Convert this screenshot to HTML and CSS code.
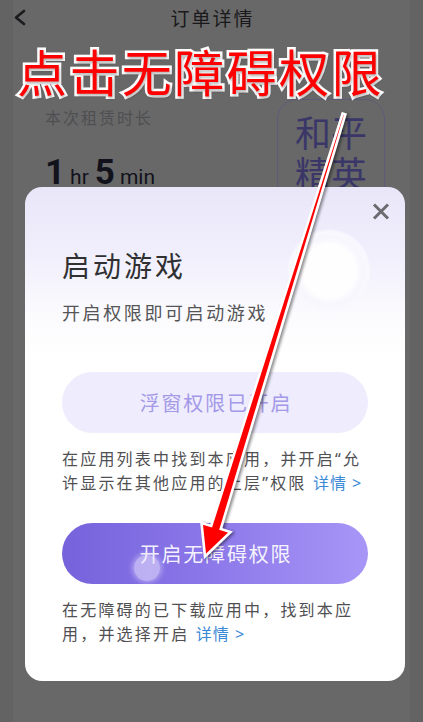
FILE: index.html
```html
<!DOCTYPE html>
<html lang="zh-CN">
<head>
<meta charset="utf-8">
<title>订单详情</title>
<link rel="stylesheet" href="styles.css">
</head>
<body>
<div class="page">
  <header class="topbar">
    <svg class="back" width="14" height="18" viewBox="0 0 14 18"><polyline points="11,2 3,8.5 11,15" fill="none" stroke="#1b1b1d" stroke-width="2.6" stroke-linecap="round" stroke-linejoin="round"/></svg>
    <h1 class="topbar-title">订单详情</h1>
  </header>

  <section class="summary">
    <div class="summary-info">
      <div class="summary-label">本次租赁时长</div>
      <div class="summary-amount"><span class="num">1</span><span class="unit">hr</span><span class="num">5</span><span class="unit">min</span></div>
    </div>
    <div class="game-tile">和平<br>精英</div>
  </section>

  <div class="annotation">点击无障碍权限</div>

  <div class="modal">
    <div class="modal-deco"></div>
    <svg class="modal-close" width="18" height="17" viewBox="0 0 18 17"><path d="M2 1.5 L16 15.5 M16 1.5 L2 15.5" stroke="#6c6b70" stroke-width="3" stroke-linecap="butt"/></svg>
    <h2 class="modal-title">启动游戏</h2>
    <p class="modal-sub">开启权限即可启动游戏</p>

    <div class="btn btn-done">浮窗权限已开启</div>
    <p class="desc">在应用列表中找到本应用，并开启“允许显示在其他应用的上层”权限 <span class="link">详情 &gt;</span></p>

    <div class="btn btn-primary">开启无障碍权限</div>
    <p class="desc">在无障碍的已下载应用中，找到本应用，并选择开启 <span class="link">详情 &gt;</span></p>

    <div class="touch"></div>
  </div>

  <svg class="arrow" width="423" height="722" viewBox="0 0 423 722">
    <polygon points="342.6,113.6 345.4,114.4 220.8,529 230.5,532 205,556.5 201.5,523 211.2,526" fill="#ff0000" stroke="#ffffff" stroke-width="2.6" stroke-linejoin="miter"/>
  </svg>
</div>
</body>
</html>
```

FILE: styles.css
```css
* { box-sizing: border-box; }
html, body { margin: 0; padding: 0; }
body {
  width: 423px;
  height: 722px;
  overflow: hidden;
  background: #606062;
  font-family: "Noto Sans CJK SC", "Noto Sans", sans-serif;
}
.page {
  position: relative;
  width: 423px;
  height: 722px;
  background: linear-gradient(90deg, #636364 0, #636364 13px, #686868 13px, #686868 410px, #636364 410px);
}
.topbar {
  height: 36px;
  display: flex;
  align-items: center;
  justify-content: center;
  position: relative;
}
.back {
  position: absolute;
  left: 13px;
  top: 9px;
}
.topbar-title {
  margin: 0;
  font-size: 19px;
  font-weight: 400;
  letter-spacing: 2px;
  color: #19191b;
  line-height: 34px;
  padding-left: 2px;
}
.summary {
  display: flex;
  justify-content: space-between;
  padding: 63px 38px 0 45px;
}
.summary-info {
  padding-top: 8px;
}
.summary-label {
  font-size: 16px;
  letter-spacing: 2px;
  line-height: 20px;
  color: #4f4f52;
}
.summary-amount {
  margin-top: 26px;
  display: flex;
  align-items: baseline;
  color: #12121c;
  font-family: "Roboto", "Liberation Sans", sans-serif;
  line-height: 40px;
}
.num {
  font-size: 35px;
  font-weight: 700;
}
.unit {
  font-size: 21px;
  margin: 0 6px 0 5px;
}
.game-tile {
  width: 108px;
  height: 130px;
  border: 1.5px solid #5d5c78;
  border-radius: 20px;
  text-align: center;
  font-size: 36px;
  line-height: 41px;
  padding-top: 11px;
  color: #3a3768;
  letter-spacing: 0;
}
.annotation {
  position: absolute;
  left: 17px;
  top: 38px;
  font-size: 50px;
  font-weight: 400;
  letter-spacing: 2.4px;
  line-height: 64px;
  color: #ff0000;
  -webkit-text-stroke: 5px #ffffff;
  paint-order: stroke fill;
  text-shadow: 1px 2px 3px rgba(0,0,0,0.3);
}
.modal {
  position: absolute;
  left: 25px;
  top: 187px;
  width: 380px;
  height: 494px;
  border-radius: 17px;
  background: linear-gradient(180deg, #e9e6f9 0%, #f1effc 14%, #fbfbfe 26%, #ffffff 34%);
  padding: 60px 37px 0 37px;
  overflow: hidden;
}
.modal-deco {
  position: absolute;
  left: 262px;
  top: 42px;
  width: 84px;
  height: 84px;
  border-radius: 50%;
  background: radial-gradient(circle, #fefeff 0 44%, #f7f6fd 56%, #f9f8fe 66%, rgba(255,255,255,0) 72%);
}
.modal-close {
  position: absolute;
  top: 16px;
  right: 15px;
}
.modal-title {
  position: relative;
  margin: 0;
  font-size: 28px;
  font-weight: 400;
  letter-spacing: 3px;
  line-height: 36px;
  color: #303033;
}
.modal-sub {
  position: relative;
  margin: 16px 0 0;
  font-size: 18px;
  letter-spacing: 2.6px;
  line-height: 26px;
  color: #555558;
}
.btn {
  height: 61px;
  border-radius: 31px;
  display: flex;
  align-items: center;
  justify-content: center;
  font-size: 20px;
  letter-spacing: 1.8px;
  padding-left: 2px;
}
.btn-done {
  margin-top: 47px;
  background: #efecfd;
  color: #a399e8;
}
.btn-primary {
  margin-top: 28px;
  background: linear-gradient(90deg, #7663dc 0%, #8a76e8 45%, #a896f7 100%);
  color: rgba(255,255,255,0.93);
}
.desc {
  margin: 14px 0 0;
  font-family: "Noto Sans", "Noto Sans CJK SC", sans-serif;
  font-size: 16px;
  letter-spacing: 2.2px;
  line-height: 24px;
  color: #505053;
}
.link {
  color: #3a8ad8;
  letter-spacing: 1px;
}
.touch {
  position: absolute;
  left: 109px;
  top: 368px;
  width: 26px;
  height: 26px;
  border-radius: 50%;
  background: rgba(236,232,255,0.55);
  box-shadow: 0 0 5px 2px rgba(230,225,255,0.45);
}
.arrow {
  position: absolute;
  left: 0;
  top: 0;
  pointer-events: none;
  filter: drop-shadow(2px 1px 1.5px rgba(0,0,0,0.45));
}
```
